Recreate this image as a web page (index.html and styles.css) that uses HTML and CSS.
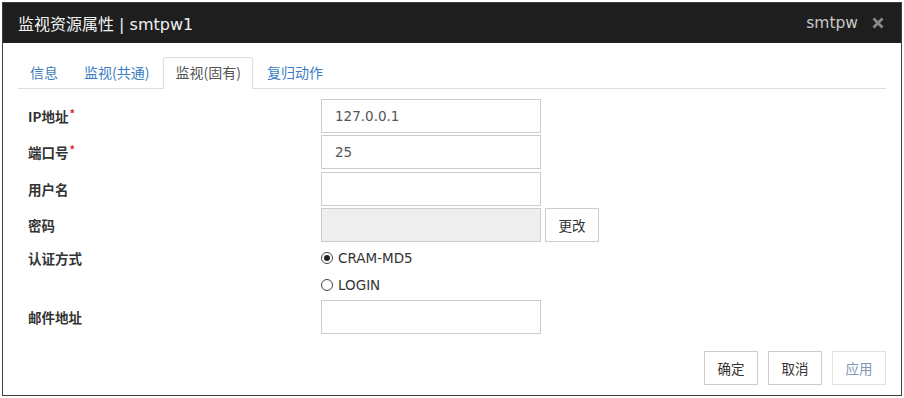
FILE: index.html
```html
<!DOCTYPE html>
<html lang="zh-CN">
<head>
<meta charset="utf-8">
<title>监视资源属性</title>
<link rel="stylesheet" href="styles.css">
</head>
<body>
<div class="dialog">
  <div class="header">
    <div class="title">监视资源属性 | smtpw1</div>
    <div class="header-right">
      <span class="type">smtpw</span>
      <svg class="close" width="12" height="12" viewBox="0 0 12 12"><path d="M1.5 1.5 L10.5 10.5 M10.5 1.5 L1.5 10.5" stroke="#8a8a8a" stroke-width="2.8" stroke-linecap="butt"/></svg>
    </div>
  </div>
  <div class="tabs">
    <div class="tab">信息</div>
    <div class="tab">监视(共通)</div>
    <div class="tab active">监视(固有)</div>
    <div class="tab">复归动作</div>
  </div>
  <div class="form">
    <div class="label">IP地址<span class="req">*</span></div>
    <div class="field"><div class="input">127.0.0.1</div></div>
    <div class="label">端口号<span class="req">*</span></div>
    <div class="field"><div class="input">25</div></div>
    <div class="label">用户名</div>
    <div class="field"><div class="input"></div></div>
    <div class="label">密码</div>
    <div class="field"><div class="input disabled"></div><div class="btn small">更改</div></div>
    <div class="label top">认证方式</div>
    <div class="radios">
      <div class="radio"><span class="dot checked"></span>CRAM-MD5</div>
      <div class="radio"><span class="dot"></span>LOGIN</div>
    </div>
    <div class="label">邮件地址</div>
    <div class="field"><div class="input"></div></div>
  </div>
  <div class="footer">
    <div class="btn">确定</div>
    <div class="btn">取消</div>
    <div class="btn disabled">应用</div>
  </div>
</div>
</body>
</html>
```
FILE: styles.css
```css
* { box-sizing: border-box; }
body {
  margin: 0;
  background: #ffffff;
  font-family: "DejaVu Sans", "Noto Sans CJK SC", sans-serif;
  color: #333;
}
.dialog {
  margin: 2px 0 0 2px;
  width: 900px;
  height: 394px;
  border: 1px solid #3c3c3c;
  display: flex;
  flex-direction: column;
  background: #fff;
}
.header {
  height: 40px;
  background: #1e1e1e;
  display: flex;
  align-items: center;
  justify-content: space-between;
  padding: 0 17px 0 15px;
  flex: none;
}
.title {
  color: #f2f2f2;
  font-size: 16px;
  font-family: "DejaVu Sans", "Noto Sans CJK SC", sans-serif;
}
.header-right {
  display: flex;
  align-items: center;
  gap: 14px;
}
.type {
  color: #c8c8c8;
  font-size: 15.5px;
}
.close { display: block; }
.tabs {
  display: flex;
  margin: 14px 15px 0 15px;
  border-bottom: 1px solid #dddddd;
  height: 32px;
  flex: none;
}
.tab {
  font-family: "Noto Sans CJK SC", sans-serif;
  font-size: 14px;
  color: #3a7dc2;
  padding: 0 11px;
  margin-right: 2px;
  height: 32px;
  line-height: 29px;
  border: 1px solid transparent;
  border-radius: 3px 3px 0 0;
}
.tab.active {
  color: #555;
  border-color: #dddddd;
  border-bottom-color: #fff;
  background: #fff;
}
.form {
  display: grid;
  grid-template-columns: 293px 1fr;
  row-gap: 2.3px;
  margin: 10px 0 0 25px;
}
.label {
  font-family: "Noto Sans CJK SC", sans-serif;
  font-weight: bold;
  font-size: 13.5px;
  color: #333;
  display: flex;
  align-items: center;
  height: 34px;
}
.label.top {
  height: 27px;
}
.req {
  color: #d0312d;
  font-size: 11px;
  align-self: flex-start;
  margin-top: 6px;
  margin-left: 1px;
}
.field {
  display: flex;
  gap: 4px;
  height: 34px;
}
.input {
  width: 220px;
  height: 34px;
  border: 1px solid #cccccc;
  padding: 0 13px;
  font-size: 13.5px;
  color: #555;
  line-height: 32px;
  background: #fff;
}
.input.disabled { background: #eeeeee; }
.btn {
  width: 54px;
  height: 34px;
  border: 1px solid #cccccc;
  font-family: "Noto Sans CJK SC", sans-serif;
  font-size: 13.5px;
  color: #333;
  display: flex;
  align-items: center;
  justify-content: center;
  background: #fff;
}
.btn.disabled {
  color: #7f96b8;
  border-color: #e3e3e3;
}
.radios {
  display: flex;
  flex-direction: column;
}
.radio {
  height: 27px;
  display: flex;
  align-items: center;
  font-size: 13.5px;
  color: #333;
}
.dot {
  width: 12px;
  height: 12px;
  border: 1px solid #444;
  border-radius: 50%;
  margin-right: 5px;
  display: flex;
  align-items: center;
  justify-content: center;
}
.dot.checked::after {
  content: "";
  width: 6px;
  height: 6px;
  border-radius: 50%;
  background: #222;
}
.footer {
  margin-top: auto;
  display: flex;
  justify-content: flex-end;
  gap: 10px;
  padding: 0 15px 10px 0;
}
```
